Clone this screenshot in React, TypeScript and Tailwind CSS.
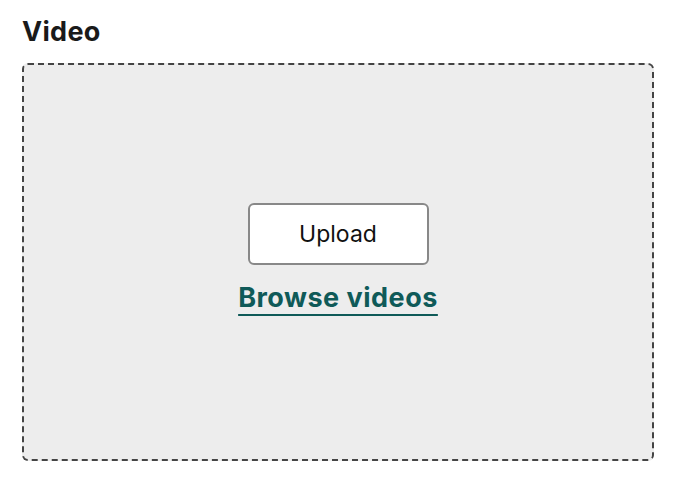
export default function App() {
  return (
    <div className="w-[680px] h-[480px] bg-white px-[22px] pt-[14px] font-['Inter',sans-serif]">
      <h2 className="text-[27px] leading-[36px] font-bold tracking-[0.3px] text-[#1a1a1a]">Video</h2>
      <div className="mt-[13px] h-[398px] w-[632px] rounded-[6px] border-2 border-dashed border-[#444] bg-[#ededed] flex flex-col items-center justify-center">
        <button className="w-[181px] h-[62px] rounded-[6px] border-2 border-[#888] bg-white text-[23px] text-[#111]">
          Upload
        </button>
        <a
          href="#"
          className="mt-[16px] mb-[6px] text-[27px] leading-[34px] font-bold tracking-[0.5px] text-[#0f5a58] underline decoration-2 underline-offset-[7px]"
        >
          Browse videos
        </a>
      </div>
    </div>
  )
}
